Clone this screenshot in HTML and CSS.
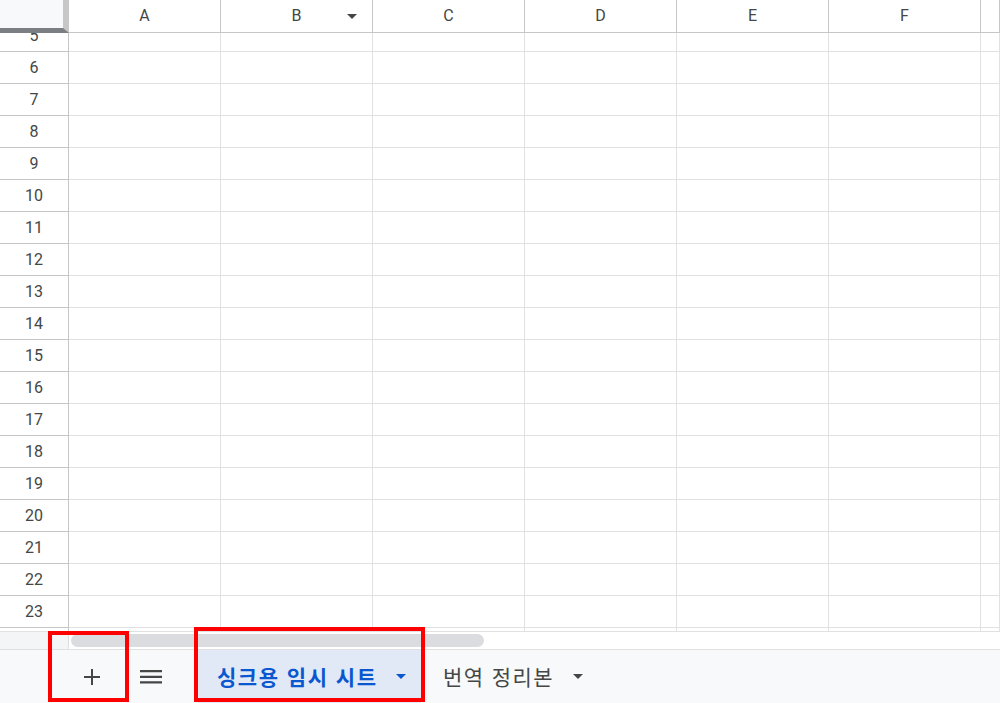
FILE: index.html
```html
<!DOCTYPE html>
<html lang="ko">
<head>
  <meta charset="UTF-8">
  <title>싱크용 임시 시트</title>
  <meta name="viewport" content="width=device-width, initial-scale=1.0">
  <link rel="stylesheet" href="styles.css">
</head>
<body>

  <div class="sheet">
    <div class="col-head">
      <div class="corner"></div>
      <div class="col">A</div>
      <div class="col col-filter">B <span class="caret"></span></div>
      <div class="col">C</div>
      <div class="col">D</div>
      <div class="col">E</div>
      <div class="col">F</div>
      <div class="col"></div>
    </div>

    <div class="grid-body">
      <div class="rows" id="rows"></div>
    </div>

    <div class="hscroll">
      <div class="hscroll-left"></div>
      <div class="hscroll-track">
        <div class="thumb"></div>
      </div>
    </div>
  </div>

  <div class="tabbar">
    <button class="icon-btn add" aria-label="시트 추가">
      <svg width="18" height="18" viewBox="0 0 18 18"><path d="M9 1v16M1 9h16" stroke="#444746" stroke-width="2"/></svg>
    </button>
    <button class="icon-btn menu" aria-label="모든 시트">
      <svg width="22" height="14" viewBox="0 0 22 14"><path d="M0 1.2h22M0 6.8h22M0 12.4h22" stroke="#444746" stroke-width="2.2"/></svg>
    </button>
    <div class="tab active">
      <span class="tab-name">싱크용 임시 시트</span>
      <span class="caret"></span>
    </div>
    <div class="tab">
      <span class="tab-name">번역 정리본</span>
      <span class="caret"></span>
    </div>
  </div>

  <div class="mark mark-add"></div>
  <div class="mark mark-tab"></div>

  <script>
    const rows = document.getElementById('rows');

    // row 24 only peeks out under row 23, so it gets no number
    for (let n = 5; n <= 24; n++) {
      const row = document.createElement('div');
      row.className = 'row';
      row.innerHTML = '<div class="row-num">' + (n < 24 ? n : '') + '</div>' +
        '<div class="cell"></div>'.repeat(7);
      rows.appendChild(row);
    }
  </script>

</body>
</html>
```

FILE: styles.css
```css
body {
  margin: 0;
  font-family: Roboto, 'Liberation Sans', sans-serif;
  background: #fff;
  width: 1000px;
  height: 703px;
  overflow: hidden;
  position: relative;
}

.sheet {
  height: 649px;
  overflow: hidden;
}

.col-head,
.row {
  display: grid;
  grid-template-columns: 69px repeat(6, 152px) 1fr;
}

.corner {
  box-sizing: border-box;
  height: 33px;
  background: #f8f9fa;
  border-right: 6px solid #c7c7c7;
  border-bottom: 5px solid #7b7f83;
}

.col {
  box-sizing: border-box;
  height: 33px;
  border-right: 1px solid #c4c7c5;
  border-bottom: 1px solid #c4c7c5;
  display: flex;
  align-items: center;
  justify-content: center;
  font-size: 16px;
  color: #444746;
  padding-bottom: 1px;
  position: relative;
}

.col-filter .caret {
  position: absolute;
  right: 15px;
  top: 14px;
}

.caret {
  display: inline-block;
  flex: none;
  width: 0;
  height: 0;
  border-left: 5.5px solid transparent;
  border-right: 5.5px solid transparent;
  border-top: 5.5px solid #444746;
}

.grid-body {
  height: 598px;
  overflow: hidden;
}

.rows {
  margin-top: -13px;
}

.row {
  height: 32px;
}

.row-num,
.cell {
  box-sizing: border-box;
  border-bottom: 1px solid #e1e1e1;
  border-right: 1px solid #e1e1e1;
}

.row-num {
  border-color: #c4c7c5;
  display: flex;
  align-items: center;
  justify-content: center;
  font-size: 16px;
  color: #444746;
}

.hscroll {
  display: flex;
  height: 18px;
  border-top: 1px solid #e1e1e1;
}

.hscroll-left {
  width: 68px;
  background: #f4f5f6;
  border-right: 1px solid #dedede;
}

.hscroll-track {
  flex: 1;
  padding: 2px 0 0 2px;
}

.thumb {
  width: 413px;
  height: 13px;
  background: #dadce0;
  border-radius: 7px;
}

.tabbar {
  height: 53px;
  border-top: 1px solid #e0e0e0;
  background: #f8f9fa;
  display: flex;
  align-items: stretch;
  padding-left: 65px;
}

.icon-btn {
  border: 0;
  background: none;
  padding: 0;
  display: flex;
  align-items: center;
  justify-content: center;
}

.add {
  width: 54px;
}

.menu {
  width: 64px;
}

.tab {
  display: flex;
  align-items: center;
  gap: 19px;
  padding: 0 16px 0 22px;
  font-family: 'Noto Sans CJK KR', sans-serif;
  font-size: 21px;
  color: #444746;
  letter-spacing: 1.4px;
  white-space: nowrap;
}

.tab .tab-name {
  padding-bottom: 2px;
}

.tab.active {
  width: 223px;
  box-sizing: border-box;
  margin-left: 15px;
  padding: 0 15px 0 19px;
  gap: 10px;
  background: #e1e9f7;
  color: #0b57d0;
  font-weight: 700;
  letter-spacing: 1.5px;
  justify-content: space-between;
}

.tab.active .caret {
  border-top-color: #0b57d0;
}

.mark {
  position: absolute;
  box-sizing: border-box;
  border: 4px solid #ff0000;
}

.mark-add {
  left: 48px;
  top: 631px;
  width: 81px;
  height: 71px;
}

.mark-tab {
  left: 194px;
  top: 627px;
  width: 231px;
  height: 75px;
}
```
